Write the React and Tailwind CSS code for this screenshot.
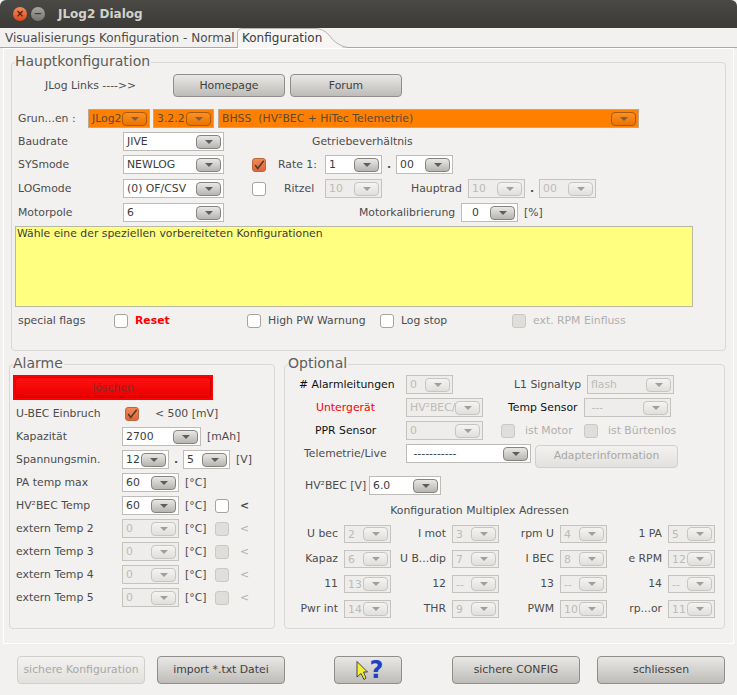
const comboStyles = {
  normal: {
    box: "bg-white border-[#bdbcb8] text-[#3c3c3c]",
    btn: "bg-gradient-to-b from-[#e9e8e6] to-[#b6b5b1] border-[#85847f]",
    tri: "border-t-[#5f5e5a]",
  },
  disabled: {
    box: "bg-[#eeedeb] border-[#c4c3bf] text-[#bcbbb7]",
    btn: "bg-gradient-to-b from-[#f5f4f3] to-[#e0dfdc] border-[#c6c5c1]",
    tri: "border-t-[#a09f9b]",
  },
  orange: {
    box: "bg-[#ff8000] border-[#bda88e] text-[#5b4a33]",
    btn: "bg-gradient-to-b from-[#ff8f1f] to-[#e87400] border-[#a85a10]",
    tri: "border-t-[#75614a]",
  },
};

const Combo = ({ w, value, kind = "normal", h = "h-[19px]", btnW = "w-[25px]" }) => {
  const s = comboStyles[kind];
  return (
    <div className={`flex shrink-0 items-center justify-between border pl-[3px] pr-[2px] ${h} ${w} ${s.box}`}>
      <span className="min-w-0 whitespace-pre leading-[15px]">{value}</span>
      <span className={`relative flex shrink-0 h-[14px] ${btnW} items-center justify-center rounded-[4px] border ${s.btn}`}>
        <span className={`h-0 w-0 border-x-[4px] border-t-[4px] border-x-transparent ${s.tri}`} />
      </span>
    </div>
  );
};

const Check = ({ on, disabled, className = "" }) => (
  <span
    className={`flex h-[14px] w-[14px] shrink-0 items-center justify-center rounded-[3px] border ${
      on
        ? "border-[#b8683c] bg-gradient-to-b from-[#f28a52] to-[#e0643a]"
        : disabled
          ? "border-[#c9c8c4] bg-[#dfdedb]"
          : "border-[#a5a4a0] bg-white"
    } ${className}`}
  >
    {on && (
      <svg width="14" height="14" viewBox="0 0 14 14" fill="none">
        <path d="M2.5 7 L5.5 11 L12.5 2" stroke="#4d3a30" strokeWidth="1.8" />
      </svg>
    )}
  </span>
);

const Button = ({ w, h = "h-[23px]", disabled, children, className = "" }) => (
  <div
    className={`flex shrink-0 items-center justify-center rounded-[4px] border ${h} ${w} ${
      disabled
        ? "border-[#d0cfcb] bg-gradient-to-b from-[#f3f2f1] to-[#e2e1de] text-[#a9a8a4]"
        : "border-[#8f8e8a] bg-gradient-to-b from-[#e9e8e6] to-[#bdbcb8] text-[#3f3f3f]"
    } ${className}`}
  >
    {children}
  </div>
);

const Panel = ({ title, className, children }) => (
  <div className={`relative rounded-[4px] border border-[#d9d8d4] ${className}`}>
    <span className="absolute left-[3px] top-[-10px] bg-[#f2f1f0] pr-[1px] text-[14px] leading-[17px] text-[#5d5d5a]">
      {title}
    </span>
    {children}
  </div>
);

const Row = ({ className = "", children }) => (
  <div className={`flex items-center whitespace-nowrap ${className}`}>{children}</div>
);

const alarmTemps = [
  { label: "PA temp max", value: "60", check: false },
  { label: "HV²BEC Temp", value: "60", check: true },
  { label: "extern Temp 2", value: "0" },
  { label: "extern Temp 3", value: "0" },
  { label: "extern Temp 4", value: "0" },
  { label: "extern Temp 5", value: "0" },
];

const multiplex = [
  [["U bec", "2"], ["I mot", "3"], ["rpm U", "4"], ["1 PA", "5"]],
  [["Kapaz", "6"], ["U B...dip", "7"], ["I BEC", "8"], ["e RPM", "12"]],
  [["11", "13"], ["12", "--"], ["13", "--"], ["14", "--"]],
  [["Pwr int", "14"], ["THR", "9"], ["PWM", "10"], ["rp...or", "11"]],
];

const MainConfig = () => (
  <Panel title="Hauptkonfiguration" className="ml-[7px] h-[289px] w-[715px]">
    <Row className="mt-[11px] h-[23px]">
      <span className="ml-[33px] w-[128px]">JLog Links ----&gt;&gt;</span>
      <Button w="w-[112px]">Homepage</Button>
      <Button w="w-[112px]" className="ml-[5px]">Forum</Button>
    </Row>
    <Row className="mt-[12px] h-[19px]">
      <span className="ml-[6px] w-[70px]">Grun...en :</span>
      <Combo kind="orange" w="w-[62px]" value="JLog2" />
      <div className="ml-[3px]"><Combo kind="orange" w="w-[61px]" value="3.2.2" /></div>
      <div className="ml-[4px]"><Combo kind="orange" w="w-[421px]" value="BHSS  (HV²BEC + HiTec Telemetrie)" /></div>
    </Row>
    <Row className="mt-[4px] h-[19px]">
      <span className="ml-[6px] w-[105px]">Baudrate</span>
      <Combo w="w-[101px]" value="JIVE" />
      <span className="ml-[88px]">Getriebeverhältnis</span>
    </Row>
    <Row className="mt-[4px] h-[19px]">
      <span className="ml-[6px] w-[105px]">SYSmode</span>
      <Combo w="w-[101px]" value="NEWLOG" />
      <Check on className="ml-[28px]" />
      <span className="ml-[12px] w-[47px]">Rate 1:</span>
      <Combo w="w-[57px]" value="1" />
      <span className="w-[14px] text-center font-bold">.</span>
      <Combo w="w-[57px]" value="00" />
    </Row>
    <Row className="mt-[5px] h-[19px]">
      <span className="ml-[6px] w-[105px]">LOGmode</span>
      <Combo w="w-[101px]" value="(0) OF/CSV" />
      <Check className="ml-[28px]" />
      <span className="ml-[18px] w-[41px]">Ritzel</span>
      <Combo kind="disabled" w="w-[57px]" value="10" />
      <span className="ml-[29px] w-[57px]">Hauptrad</span>
      <Combo kind="disabled" w="w-[57px]" value="10" />
      <span className="w-[14px] text-center font-bold">.</span>
      <Combo kind="disabled" w="w-[57px]" value="00" />
    </Row>
    <Row className="mt-[5px] h-[19px]">
      <span className="ml-[6px] w-[105px]">Motorpole</span>
      <Combo w="w-[101px]" value="6" />
      <span className="ml-[135px] w-[102px]">Motorkalibrierung</span>
      <Combo w="w-[57px]" value="  0" />
      <span className="ml-[6px]">[%]</span>
    </Row>
    <div className="ml-[3px] mt-[4px] h-[81px] w-[678px] border border-[#b9b8a0] bg-[#ffff80] px-[1px] text-[#3c3c3c]">
      Wähle eine der speziellen vorbereiteten Konfigurationen
    </div>
    <Row className="mt-[4px] h-[19px]">
      <span className="ml-[6px] w-[96px]">special flags</span>
      <Check />
      <span className="ml-[7px] w-[112px] font-bold text-[#ff0000]">Reset</span>
      <Check />
      <span className="ml-[7px] w-[112px]">High PW Warnung</span>
      <Check />
      <span className="ml-[7px] w-[111px]">Log stop</span>
      <Check disabled />
      <span className="ml-[7px] text-[#b0afab]">ext. RPM Einfluss</span>
    </Row>
  </Panel>
);

const Alarme = () => (
  <Panel title="Alarme" className="h-[265px] w-[266px]">
    <div className="ml-[3px] mt-[10px] w-[200px] bg-[#ff0000] p-[2px]">
      <div className="flex h-[21px] items-center justify-center rounded-[3px] border border-[#c40000] bg-gradient-to-b from-[#ff1010] to-[#e80000] text-[#7d2f2f]">
        löschen
      </div>
    </div>
    <Row className="mt-[4px] h-[19px]">
      <span className="ml-[6px] w-[109px]">U-BEC Einbruch</span>
      <Check on />
      <span className="ml-[16px]">&lt; 500 [mV]</span>
    </Row>
    <Row className="mt-[4px] h-[19px]">
      <span className="ml-[6px] w-[106px]">Kapazität</span>
      <Combo w="w-[79px]" value="2700" />
      <span className="ml-[6px]">[mAh]</span>
    </Row>
    <Row className="mt-[4px] h-[19px]">
      <span className="ml-[6px] w-[106px]">Spannungsmin.</span>
      <Combo w="w-[47px]" value="12" />
      <span className="w-[14px] text-center font-bold">.</span>
      <Combo w="w-[47px]" value="5" />
      <span className="ml-[6px]">[V]</span>
    </Row>
    {alarmTemps.map((t) => (
      <Row key={t.label} className="mt-[4px] h-[19px]">
        <span className="ml-[6px] w-[106px]">{t.label}</span>
        <Combo w="w-[57px]" value={t.value} kind={t.value === "0" ? "disabled" : "normal"} />
        <span className="ml-[6px] w-[30px]">[°C]</span>
        {t.check === false ? null : (
          <>
            <Check disabled={t.value === "0"} />
            <span className={`ml-[11px] ${t.value === "0" ? "text-[#b0afab]" : "font-bold"}`}>&lt;</span>
          </>
        )}
      </Row>
    ))}
  </Panel>
);

const Optional = () => (
  <Panel title="Optional" className="ml-[9px] h-[265px] w-[441px]">
    <Row className="mt-[10px] h-[19px]">
      <span className="ml-[14px] w-[107px] text-[#111]">#&nbsp;Alarmleitungen</span>
      <Combo kind="disabled" w="w-[47px]" value="0" />
      <span className="ml-[61px] w-[73px]">L1 Signaltyp</span>
      <Combo kind="disabled" w="w-[87px]" value="flash" />
    </Row>
    <Row className="mt-[4px] h-[19px]">
      <span className="ml-[31px] w-[90px] text-[#ff0000]">Untergerät</span>
      <Combo kind="disabled" w="w-[77px]" value="HV²BEC/I" />
      <span className="ml-[25px] w-[76px] text-[#111]">Temp Sensor</span>
      <Combo kind="disabled" w="w-[87px]" value=" ---" />
    </Row>
    <Row className="mt-[4px] h-[19px]">
      <span className="ml-[30px] w-[91px] text-[#111]">PPR Sensor</span>
      <Combo kind="disabled" w="w-[77px]" value="0" />
      <Check disabled className="ml-[18px]" />
      <span className="ml-[10px] w-[59px] text-[#b0afab]">ist Motor</span>
      <Check disabled />
      <span className="ml-[10px] text-[#b0afab]">ist Bürtenlos</span>
    </Row>
    <Row className="mt-[4px] h-[19px]">
      <span className="ml-[19px] w-[102px]">Telemetrie/Live</span>
      <Combo w="w-[125px]" value=" -----------" />
      <Button disabled w="w-[143px]" className="ml-[4px] mt-[5px]">Adapterinformation</Button>
    </Row>
    <Row className="mt-[13px] h-[19px]">
      <span className="ml-[20px] w-[64px]">HV²BEC [V]</span>
      <Combo w="w-[72px]" value="6.0" />
    </Row>
    <div className="mt-[6px] h-[19px] w-[374px] pl-[15px] text-center leading-[19px]">Konfiguration Multiplex Adressen</div>
    <div className="mt-[5px] grid grid-cols-[106px_108px_108px_108px] gap-y-[7px]">
      {multiplex.flat().map(([label, value]) => (
        <div key={label} className="flex items-center justify-end gap-[6px] whitespace-nowrap">
          <span>{label}</span>
          <Combo kind="disabled" w="w-[47px]" h="h-[18px]" value={value} />
        </div>
      ))}
    </div>
  </Panel>
);

export default function App() {
  return (
    <div className="relative h-[695px] w-[737px] overflow-hidden bg-[#f2f1f0] font-['DejaVu_Sans',sans-serif] text-[10.85px] leading-[14px] text-[#4c4c4c]">
      {/* title bar */}
      <div className="flex h-[28px] items-center rounded-t-[6px] bg-gradient-to-b from-[#4a4945] to-[#3c3b37]">
        <span className="ml-[13px] flex h-[14px] w-[14px] items-center justify-center rounded-full bg-gradient-to-b from-[#f58a5a] to-[#d9480f] text-[10px] font-bold text-[#4a2010]">×</span>
        <span className="ml-[4px] flex h-[14px] w-[14px] items-center justify-center rounded-full bg-gradient-to-b from-[#a8a7a2] to-[#74736e] text-[10px] font-bold text-[#3c3b37]">−</span>
        <span className="ml-[13px] text-[12px] font-bold text-[#d2d1cb]">JLog2 Dialog</span>
      </div>

      {/* tabs */}
      <div className="relative flex h-[20px] items-center whitespace-nowrap border-b border-[#a9a8a4] pl-[5px] text-[12px]">
        <span className="w-[237px]">Visualisierungs Konfiguration - Normal</span>
        <svg className="absolute left-[237px] top-0" width="110" height="20" viewBox="0 0 110 20">
          <path d="M0.5 20 V5 Q0.5 1 5 0.5 H78 Q86 0.5 92 7 Q98 16 108 19 H110 V20 Z" fill="#f7f6f5" stroke="#b5b4b0" />
          <rect x="1" y="19" width="104" height="1" fill="#f7f6f5" />
        </svg>
        <span className="relative text-[#3c3c3c]">Konfiguration</span>
      </div>

      {/* tab pane */}
      <div className="ml-[3px] h-[596px] w-[731px] border border-white pt-[13px]">
        <MainConfig />
        <div className="ml-[5px] mt-[13px] flex">
          <Alarme />
          <Optional />
        </div>
      </div>

      {/* bottom buttons */}
      <div className="mt-[12px] flex">
        <Button disabled w="w-[128px]" h="h-[28px]" className="ml-[17px]">sichere Konfiguration</Button>
        <Button w="w-[128px]" h="h-[28px]" className="ml-[12px]">import *.txt Datei</Button>
        <Button w="w-[68px]" h="h-[28px]" className="ml-[49px] pl-[3px]">
          <svg width="12" height="19" viewBox="0 0 12 19">
            <path d="M1 0.5 L11.5 11 L7.5 11 L10 17 L8 18.5 L5 12.5 L1 16 Z" fill="#f3ee3a" stroke="#222" strokeWidth="0.8" />
          </svg>
          <span className="ml-[2px] text-[24px] font-bold leading-none text-[#1f3fc8]">?</span>
        </Button>
        <Button w="w-[128px]" h="h-[28px]" className="ml-[50px]">sichere CONFIG</Button>
        <Button w="w-[128px]" h="h-[28px]" className="ml-[17px]">schliessen</Button>
      </div>
    </div>
  );
}
